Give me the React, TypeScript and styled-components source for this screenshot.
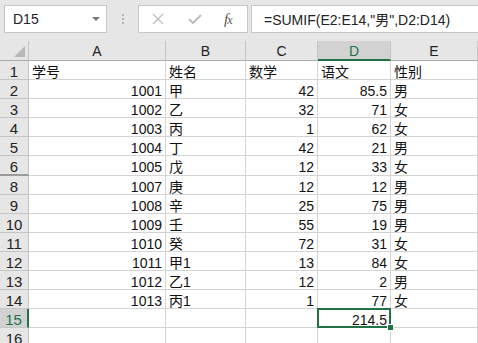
import React from "react";
import styled, { createGlobalStyle } from "styled-components";

const GlobalStyle = createGlobalStyle`
  html, body { margin: 0; padding: 0; background: #ffffff; }
  body { font-family: "Liberation Sans", "Noto Sans CJK SC", sans-serif; color: #222; overflow: hidden; }
  * { box-sizing: border-box; }
`;

const Page = styled.div`
  width: 478px;
  height: 343px;
  overflow: hidden;
  display: flex;
  flex-direction: column;
`;

const Toolbar = styled.div`
  height: 41px;
  flex: none;
  background: #e6e6e6;
  display: flex;
  align-items: flex-start;
  padding: 5px 0 0 4px;
`;

const NameBox = styled.div`
  width: 103px;
  height: 28px;
  background: #fff;
  border: 1px solid #c6c6c6;
  display: flex;
  align-items: center;
  justify-content: space-between;
  padding: 0 6px 0 8px;
  font-size: 14px;
  color: #222;
`;

const DropArrow = styled.span`
  width: 0;
  height: 0;
  border-left: 4px solid transparent;
  border-right: 4px solid transparent;
  border-top: 4px solid #7a7a7a;
`;

const Grip = styled.div`
  width: 31px;
  height: 28px;
  display: flex;
  flex-direction: column;
  align-items: center;
  justify-content: center;
  gap: 2px;
`;

const Dot = styled.span`
  width: 2px;
  height: 2px;
  background: #b4b4b4;
`;

const FxBox = styled.div`
  width: 110px;
  height: 28px;
  background: #fff;
  border: 1px solid #c6c6c6;
  display: flex;
  align-items: center;
  padding: 0 0 0 13px;
`;

const IconSlot = styled.div`
  width: 36px;
  display: flex;
  align-items: center;
  justify-content: flex-start;
`;

const FxLabel = styled.span`
  font-family: "Liberation Serif", serif;
  font-style: italic;
  font-size: 15px;
  color: #555;
  letter-spacing: -1px;
`;

const FxSub = styled.span`
  font-size: 12px;
`;

const FormulaInput = styled.div`
  flex: 1;
  height: 28px;
  margin-left: 3px;
  background: #fff;
  border: 1px solid #c6c6c6;
  border-right: none;
  display: flex;
  align-items: center;
  padding-left: 12px;
  font-size: 14px;
  color: #222;
  white-space: nowrap;
`;

const Sheet = styled.div`
  display: grid;
  grid-template-columns: 29px 137px 80px 72px 73px 1fr;
  grid-template-rows: 20px repeat(5, 19px) 20px repeat(8, 19px) 19px;
  flex: 1;
`;

const Corner = styled.div`
  background: #e6e6e6;
  border-right: 1px solid #c6c6c6;
  border-bottom: 1px solid #ababab;
  position: relative;
  &::after {
    content: "";
    position: absolute;
    right: 3px;
    bottom: 3px;
    width: 0;
    height: 0;
    border-left: 11px solid transparent;
    border-bottom: 11px solid #b8b8b8;
  }
`;

const ColHead = styled.div<{ $sel?: boolean }>`
  background: ${(p) => (p.$sel ? "#d2d2d2" : "#e6e6e6")};
  border-right: 1px solid #c6c6c6;
  border-bottom: ${(p) => (p.$sel ? "2px solid #217346" : "1px solid #ababab")};
  color: ${(p) => (p.$sel ? "#217346" : "#222")};
  font-size: 14px;
  line-height: 21px;
  text-align: center;
  overflow: hidden;
`;

const RowHead = styled.div<{ $sel?: boolean; $gap?: boolean }>`
  background: ${(p) => (p.$sel ? "#d2d2d2" : "#e6e6e6")};
  border-right: ${(p) => (p.$sel ? "2px solid #217346" : "1px solid #c6c6c6")};
  border-bottom: ${(p) => (p.$gap ? "2px solid #9a9a9a" : "1px solid #c6c6c6")};
  color: ${(p) => (p.$sel ? "#217346" : "#222")};
  font-size: 15px;
  line-height: 21px;
  text-align: center;
  overflow: hidden;
`;

const Cell = styled.div<{ $right?: boolean }>`
  border-right: 1px solid #d4d4d4;
  border-bottom: 1px solid #d4d4d4;
  font-size: 14px;
  line-height: 22px;
  padding: 0 3px;
  text-align: ${(p) => (p.$right ? "right" : "left")};
  white-space: nowrap;
  position: relative;
  color: #111;
`;

const ActiveFrame = styled.div`
  position: absolute;
  left: -1px;
  top: -1px;
  right: -1px;
  bottom: -1px;
  border: 2px solid #217346;
  pointer-events: none;
  z-index: 2;
`;

const FillHandle = styled.div`
  position: absolute;
  right: -5px;
  bottom: -5px;
  width: 7px;
  height: 7px;
  background: #217346;
  border: 1px solid #fff;
`;

type Row = { n: number; cells: (string | number | null)[] };

const rows: Row[] = [
  { n: 1, cells: ["学号", "姓名", "数学", "语文", "性别"] },
  { n: 2, cells: [1001, "甲", 42, 85.5, "男"] },
  { n: 3, cells: [1002, "乙", 32, 71, "女"] },
  { n: 4, cells: [1003, "丙", 1, 62, "女"] },
  { n: 5, cells: [1004, "丁", 42, 21, "男"] },
  { n: 6, cells: [1005, "戊", 12, 33, "女"] },
  { n: 8, cells: [1007, "庚", 12, 12, "男"] },
  { n: 9, cells: [1008, "辛", 25, 75, "男"] },
  { n: 10, cells: [1009, "壬", 55, 19, "男"] },
  { n: 11, cells: [1010, "癸", 72, 31, "女"] },
  { n: 12, cells: [1011, "甲1", 13, 84, "女"] },
  { n: 13, cells: [1012, "乙1", 12, 2, "男"] },
  { n: 14, cells: [1013, "丙1", 1, 77, "女"] },
  { n: 15, cells: [null, null, null, 214.5, null] },
  { n: 16, cells: [null, null, null, null, null] },
];

const cols = ["A", "B", "C", "D", "E"];

const CrossIcon = () => (
  <svg width="12" height="12" viewBox="0 0 12 12">
    <path d="M1 1 L11 11 M11 1 L1 11" stroke="#bdbdbd" strokeWidth="1.3" fill="none" />
  </svg>
);

const CheckIcon = () => (
  <svg width="14" height="12" viewBox="0 0 14 12">
    <path d="M1 6 L5 10 L13 2" stroke="#bdbdbd" strokeWidth="2" fill="none" />
  </svg>
);

export default function App() {
  return (
    <Page>
      <GlobalStyle />
      <Toolbar>
        <NameBox>
          <span>D15</span>
          <DropArrow />
        </NameBox>
        <Grip>
          <Dot />
          <Dot />
          <Dot />
        </Grip>
        <FxBox>
          <IconSlot>
            <CrossIcon />
          </IconSlot>
          <IconSlot>
            <CheckIcon />
          </IconSlot>
          <FxLabel>
            f<FxSub>x</FxSub>
          </FxLabel>
        </FxBox>
        <FormulaInput>=SUMIF(E2:E14,"男",D2:D14)</FormulaInput>
      </Toolbar>
      <Sheet>
        <Corner />
        {cols.map((c) => (
          <ColHead key={c} $sel={c === "D"}>
            {c}
          </ColHead>
        ))}
        {rows.map((r) => (
          <React.Fragment key={r.n}>
            <RowHead $sel={r.n === 15} $gap={r.n === 6}>
              {r.n}
            </RowHead>
            {r.cells.map((v, i) => {
              const active = r.n === 15 && i === 3;
              return (
                <Cell key={i} $right={typeof v === "number"}>
                  {v}
                  {active && (
                    <ActiveFrame>
                      <FillHandle />
                    </ActiveFrame>
                  )}
                </Cell>
              );
            })}
          </React.Fragment>
        ))}
      </Sheet>
    </Page>
  );
}
